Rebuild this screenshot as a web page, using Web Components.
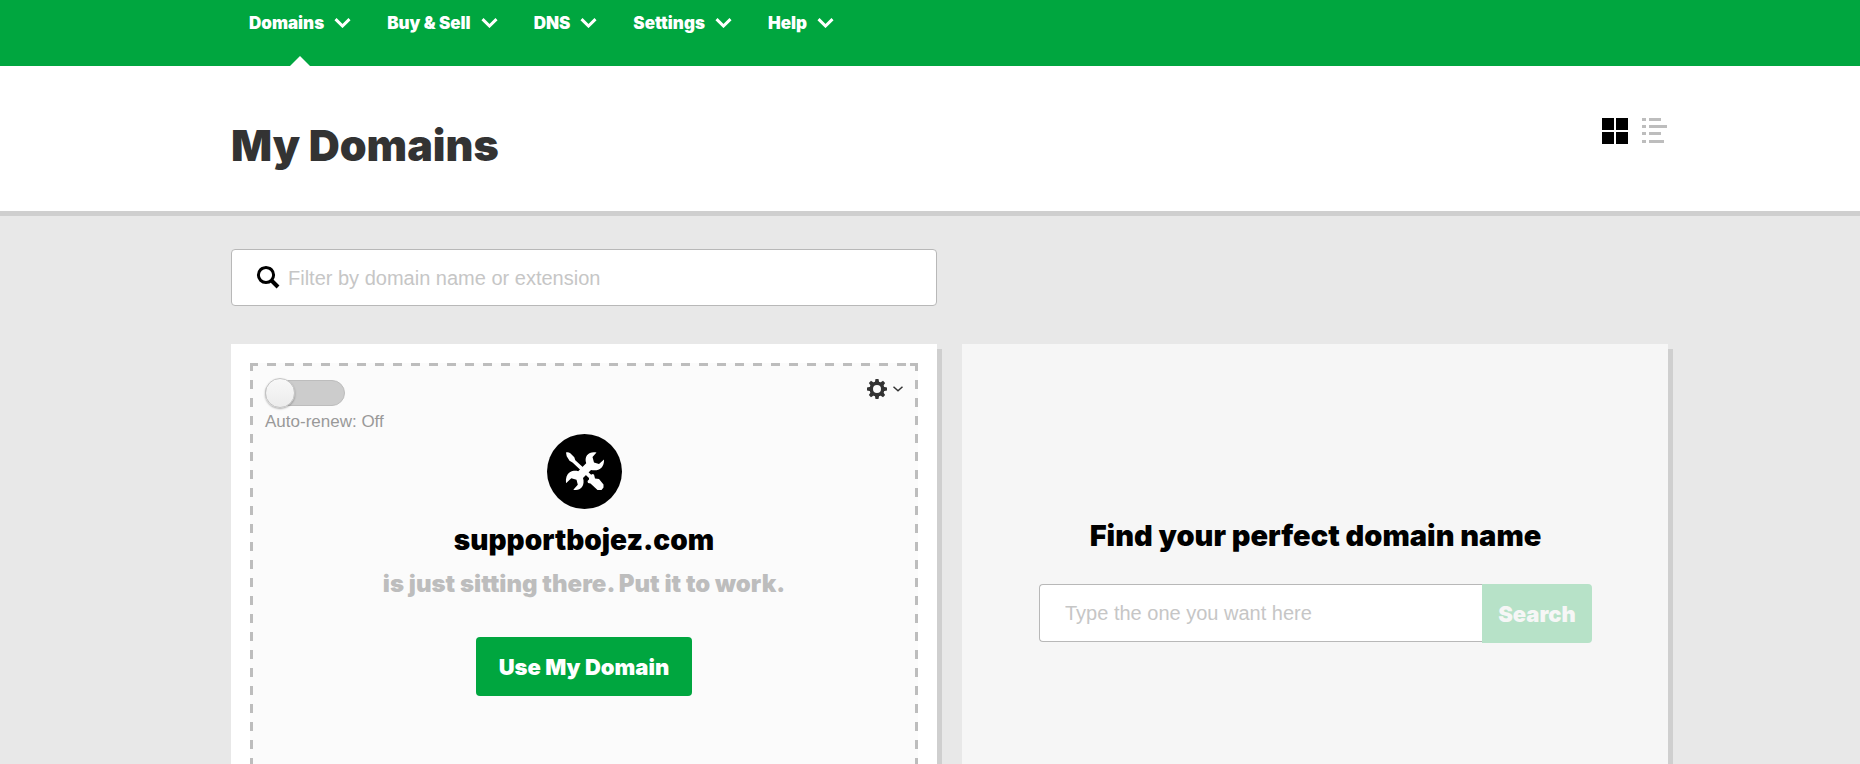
<!DOCTYPE html>
<html lang="en">
<head>
<meta charset="utf-8">
<meta name="viewport" content="width=device-width, initial-scale=1">
<title>My Domains</title>
<style>
body{display:flex;flex-direction:column;min-height:100vh;margin:0;background:#e8e8e8;color:#333;font-family:"Liberation Sans",Arial,sans-serif;--display:Inter,Lato,sans-serif;--green:#00a63f;--line:#bdbdbd;--gutter-left:231px;--gutter-right:192px}
</style>
</head>
<body>
<domain-nav>
  <nav-item active>Domains</nav-item>
  <nav-item>Buy &amp; Sell</nav-item>
  <nav-item>DNS</nav-item>
  <nav-item>Settings</nav-item>
  <nav-item>Help</nav-item>
</domain-nav>
<page-header>My Domains<view-switch slot="actions"></view-switch></page-header>
<domain-list>
  <domain-filter slot="filter"></domain-filter>
  <domain-card>supportbojez.com</domain-card>
  <search-card>Find your perfect domain name</search-card>
</domain-list>
<script>
const define = (name, html) => customElements.define(name, class extends HTMLElement {
  constructor() {
    super();
    const t = document.createElement('template');
    t.innerHTML = '<style>*{box-sizing:border-box}button{border:0;padding:0;background:none;color:inherit;font:inherit;cursor:pointer}svg{display:block}</style>' + html;
    this.attachShadow({mode: 'open'}).append(t.content.cloneNode(true));
  }
});

define('domain-nav', `<style>
:host{display:block;background:var(--green);color:#fff}
nav{display:flex;gap:36px;height:66px;padding-left:calc(var(--gutter-left) + 18px)}
</style><nav aria-label="Main"><slot></slot></nav>`);

define('nav-item', `<style>
:host{display:block;position:relative;height:66px}
button{display:flex;align-items:center;gap:10px;height:46px;font:900 17px/24px var(--display);white-space:nowrap}
:host([active])::after{content:"";position:absolute;left:50%;bottom:0;margin-left:-10px;border:solid transparent;border-width:0 10px 10px;border-bottom-color:#fff}
</style><button type="button" aria-haspopup="true"><slot></slot>
<svg width="17" height="10" viewBox="0 0 17 10" fill="none" stroke="currentColor" stroke-width="3" aria-hidden="true"><path d="M1.5 1.2 8.5 8 15.500 1.200"/></svg></button>`);

define('page-header', `<style>
:host{display:block;background:#fff;border-bottom:5px solid #cfcfcf}
header{display:flex;justify-content:space-between;height:145px;padding:51px var(--gutter-right) 0 var(--gutter-left)}
h1{margin:0;font:900 43px/56px var(--display)}
</style><header><h1><slot></slot></h1><slot name="actions"></slot></header>`);

define('view-switch', `<style>
:host{display:flex;gap:14px;align-items:flex-start}
.list{color:var(--line)}.grid{color:#000}
</style>
<button class="grid" type="button" aria-label="Grid view" aria-pressed="true"><svg width="26" height="28" fill="currentColor"><path d="M0 1h12v12H0zM14 1h12v12H14zM0 15h12v12H0zM14 15h12v12H14z"/></svg></button>
<button class="list" type="button" aria-label="List view"><svg width="26" height="28" fill="currentColor"><path d="M0 1h4v3H0zM0 8h4v3H0zM0 15h4v3H0zM0 23h4v3H0zM7 1h12v3H7zM7 8h18v3H7zM7 15h12v3H7zM7 23h15v3H7z"/></svg></button>`);

define('domain-list', `<style>
:host{flex:1;display:grid;grid-template:auto 1fr/1fr 1fr;gap:38px 25px;padding:33px var(--gutter-right) 0 var(--gutter-left)}
.filter{grid-column:1/-1;display:grid;grid-template-columns:1fr 1fr;gap:25px}
</style><div class="filter"><slot name="filter"></slot></div><slot></slot>`);

define('domain-filter', `<style>
:host{display:block}
label{display:flex;align-items:center;height:57px;padding-left:24px;gap:8px;background:#fff;border:1px solid #b8b8b8;border-radius:4px}
input{flex:1;min-width:0;height:55px;border:0;padding:2px 0 0;background:none;font:20px "Liberation Sans",Arial,sans-serif;outline:0}
input::placeholder{color:#c6c6c6;opacity:1}
</style><label><svg width="24" height="26" viewBox="0 0 24 26" fill="none" stroke="#000" aria-hidden="true"><circle cx="10" cy="10" r="7.600" stroke-width="3"/><path d="m15.500 15.500 6.500 6.500" stroke-width="4"/></svg>
<input type="text" aria-label="Filter domains" placeholder="Filter by domain name or extension"></label>`);

define('renew-toggle', `<style>
:host{display:block}
label{display:flex;flex-direction:column;width:max-content;color:#999;font-size:17px;line-height:20px}
input{appearance:none;position:relative;margin:2px 0 6px;width:80px;height:26px;border-radius:13px;background:#ccc;border:1px solid #bdbdbd}
input::before{content:"";position:absolute;left:-1px;top:-3px;width:30px;height:30px;box-sizing:border-box;border:1px solid #c4c4c4;border-radius:50%;background:linear-gradient(#f8f8f8,#ececec);box-shadow:0 1px 2px rgba(0,0,0,.3)}
input:checked{background:var(--green)}input:checked::before{left:49px}
</style><label><input type="checkbox" role="switch"><span>Auto-renew: Off</span></label>`);

define('domain-card', `<style>
:host{display:flex;padding:19px 19px 0;background:#fff;box-shadow:5px 5px 0 #cfcfcf}
.frame{flex:1;padding:15px;text-align:center;
 --c:var(--line);--dash:var(--c) 0 8px,transparent 8px 17px,var(--c) 17px 18px;
 background:
 linear-gradient(var(--c),var(--c)) 100% 0/8px 3px no-repeat,
 linear-gradient(var(--c),var(--c)) 100% 0/3px 8px no-repeat,
 repeating-linear-gradient(90deg,var(--dash)) 0 0/calc(100% - 12px) 3px no-repeat,
 repeating-linear-gradient(var(--dash)) 0 0/3px 100% no-repeat,
 repeating-linear-gradient(var(--dash)) 100% 0/3px 100% no-repeat,#fbfbfb}
.tools{display:flex;justify-content:space-between;align-items:flex-start;height:56px;text-align:left}
.gear{display:flex;align-items:center;gap:6px;color:#333}
.badge{display:block;margin:0 auto}
h2{margin:11px 0 0;color:#000;font:900 28px/40px var(--display)}
p{margin:6px 0 0;color:var(--line);font:900 24px/36px var(--display)}
.cta{margin-top:35px;width:216px;height:59px;border-radius:4px;background:var(--green);color:#fff;font:900 22px/30px var(--display)}
</style><div class="frame"><div class="tools"><renew-toggle></renew-toggle>
<button class="gear" type="button" aria-label="Domain settings"><svg width="20" height="22" viewBox="-10 -11 20 22"><g fill="currentColor"><path fill-rule="evenodd" d="M0-7.500a7.500 7.500 0 1 0 0 15a7.500 7.500 0 1 0 0-15zM0-4a4 4 0 1 1 0 8a4 4 0 1 1 0-8z"/><path d="m-2.200-6.500.7-3.500h3l.7 3.500zm0 13 .7 3.500h3l.7-3.500zM-6.500-2.200l-3.500.7v3l3.500.7zm13 0 3.500.7v3l-3.500.7z"/><path transform="rotate(45)" d="m-2.200-6.500.7-3.500h3l.7 3.500zm0 13 .7 3.500h3l.7-3.500zM-6.500-2.200l-3.500.7v3l3.500.7zm13 0 3.500.7v3l-3.500.7z"/></g></svg>
<svg width="10" height="6" viewBox="0 0 10 6" fill="none" stroke="currentColor" stroke-width="1.500"><path d="m.5.700 4.500 4 4.500-4"/></svg></button></div>
<svg class="badge" width="75" height="75" viewBox="0 0 75 75" aria-hidden="true"><circle cx="37.500" cy="37.500" r="37.500"/><g fill="#fff"><path d="M19 18.500c1.500-.6 3-.2 4.300.8l4 4 1 3L45 41.500 42 44 25.500 28.500l-3-1.700-2.800-4.600z"/><path d="M42 43.500l3-3.500 2 .5 1 4 4 .5 4.500 5.500v3L54.500 56h-4L43.500 49.500l-2.500-.5-.5-2 1.500-1.500z"/><path d="M49.500 18.500 45.500 23l1.500 5.500 5 1.500 5-4.500c.2 5-1.700 8.500-5 10-3.200 1.200-6 .8-8 .5L36 44c1 3 .8 6.500-1 9-2 2.800-5.200 3.500-8.700 2.700l4.500-5-1.300-5-5.200-1.500-5.300 5c-.5-5.200.8-9 3.800-11 3-1.700 6-1.600 8.400-1l8-7.900c-1-3-.8-5.800.8-8 2.200-2.700 5.500-3.700 9.500-2.800z"/></g></svg>
<h2><slot></slot></h2><p>is just sitting there. Put it to work.</p>
<button class="cta" type="button">Use My Domain</button></div>`);

define('search-card', `<style>
:host{display:block;padding:172px 76px 0 77px;background:#f6f6f6;box-shadow:5px 5px 0 #cfcfcf;text-align:center}
h2{margin:0;color:#000;font:900 29px/40px var(--display)}
form{display:flex;align-items:flex-start;margin-top:28px}
input{flex:1;min-width:0;height:58px;padding:0 25px;border:1px solid #b8b8b8;border-right:0;border-radius:4px 0 0 4px;background:#fff;font:20px "Liberation Sans",Arial,sans-serif}
input::placeholder{color:#c6c6c6;opacity:1}
button{width:110px;height:59px;border-radius:0 4px 4px 0;background:#b7e2c8;color:#f6f6f6;font:900 22px/30px var(--display)}
</style><h2><slot></slot></h2><form><input type="text" aria-label="Domain name" placeholder="Type the one you want here"><button type="button">Search</button></form>`);
</script>
</body>
</html>
